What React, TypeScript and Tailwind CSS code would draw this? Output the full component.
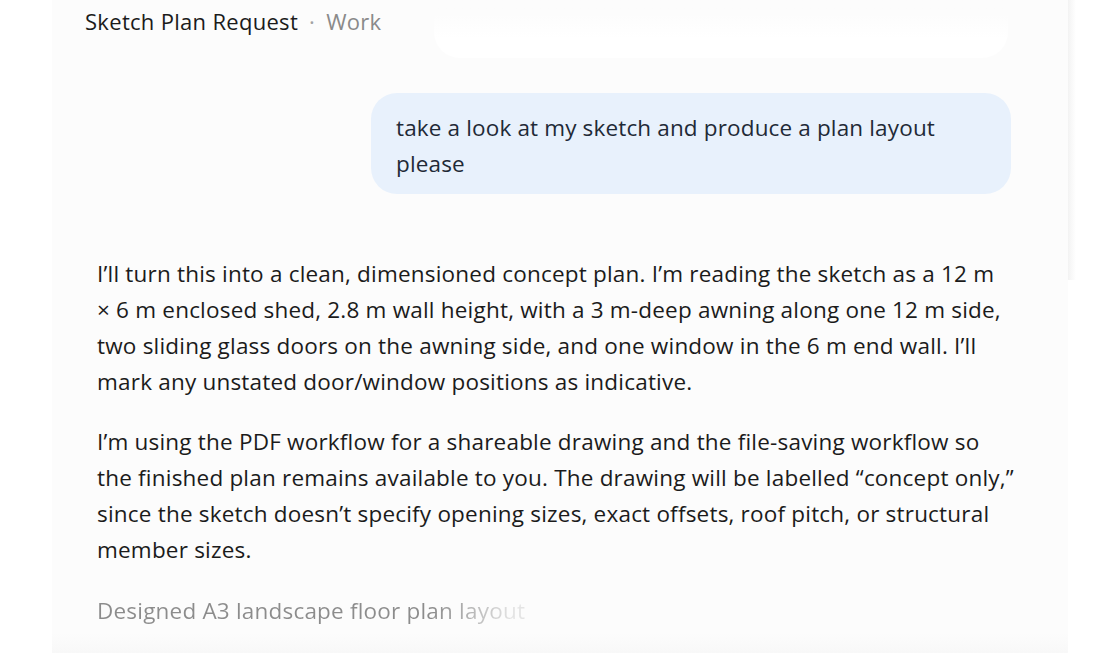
const font = { fontFamily: '"Open Sans", "Noto Sans", sans-serif' };

export default function App() {
  return (
    <div className="flex h-[653px] w-full overflow-hidden bg-white" style={font}>
      <div className="w-[52px] shrink-0 bg-white" />
      <main className="relative flex w-[1016px] shrink-0 flex-col bg-[#fcfcfc]">
        <header className="flex h-[43px] items-center px-[33px] text-[22px] tracking-[0.3px]">
          <span className="text-[#1b1b1b]">Sketch Plan Request</span>
          <span className="mx-[11px] text-[#a3a3a3]">·</span>
          <span className="text-[#8a8a8a]">Work</span>
        </header>

        <div className="absolute left-[382px] top-[-40px] h-[98px] w-[574px] rounded-b-[26px] bg-gradient-to-b from-[#fcfcfc] from-[55%] to-white to-[80%]" />

        <div className="flex justify-end pr-[57px] pt-[50px]">
          <div className="w-[640px] whitespace-nowrap rounded-[26px] bg-[#e8f1fc] pl-[25px] pr-[20px] pb-[12px] pt-[17px] text-[22.5px] leading-[36px] tracking-[0.15px] text-[#1f2a37]">
            take a look at my sketch and produce a plan layout
            <br />
            please
          </div>
        </div>

        <div className="flex flex-col gap-[24px] pl-[45px] pr-[40px] pt-[62px] text-[22.5px] leading-[36px] tracking-[0.2px] whitespace-nowrap text-[#1b1b1b]">
          <p>
            I’ll turn this into a clean, dimensioned concept plan. I’m reading the sketch as a 12 m
            <br />
            × 6 m enclosed shed, 2.8 m wall height, with a 3 m-deep awning along one 12 m side,
            <br />
            two sliding glass doors on the awning side, and one window in the 6 m end wall. I’ll
            <br />
            mark any unstated door/window positions as indicative.
          </p>
          <p>
            I’m using the PDF workflow for a shareable drawing and the file-saving workflow so
            <br />
            the finished plan remains available to you. The drawing will be labelled “concept only,”
            <br />
            since the sketch doesn’t specify opening sizes, exact offsets, roof pitch, or structural
            <br />
            member sizes.
          </p>
          <p className="w-fit bg-gradient-to-r from-[#8c8c8c] from-[78%] to-[#e4e4e4] to-[97%] bg-clip-text pt-[1px] text-transparent">
            Designed A3 landscape floor plan layout
          </p>
        </div>

        <div className="pointer-events-none absolute bottom-0 left-0 right-0 h-[20px] bg-gradient-to-b from-transparent to-[#f8f8f8]" />
      </main>
      <div className="relative flex-1 bg-white">
        <div className="absolute left-0 top-0 h-[280px] w-[8px] bg-gradient-to-r from-[#f3f3f3] to-white" />
      </div>
    </div>
  );
}
